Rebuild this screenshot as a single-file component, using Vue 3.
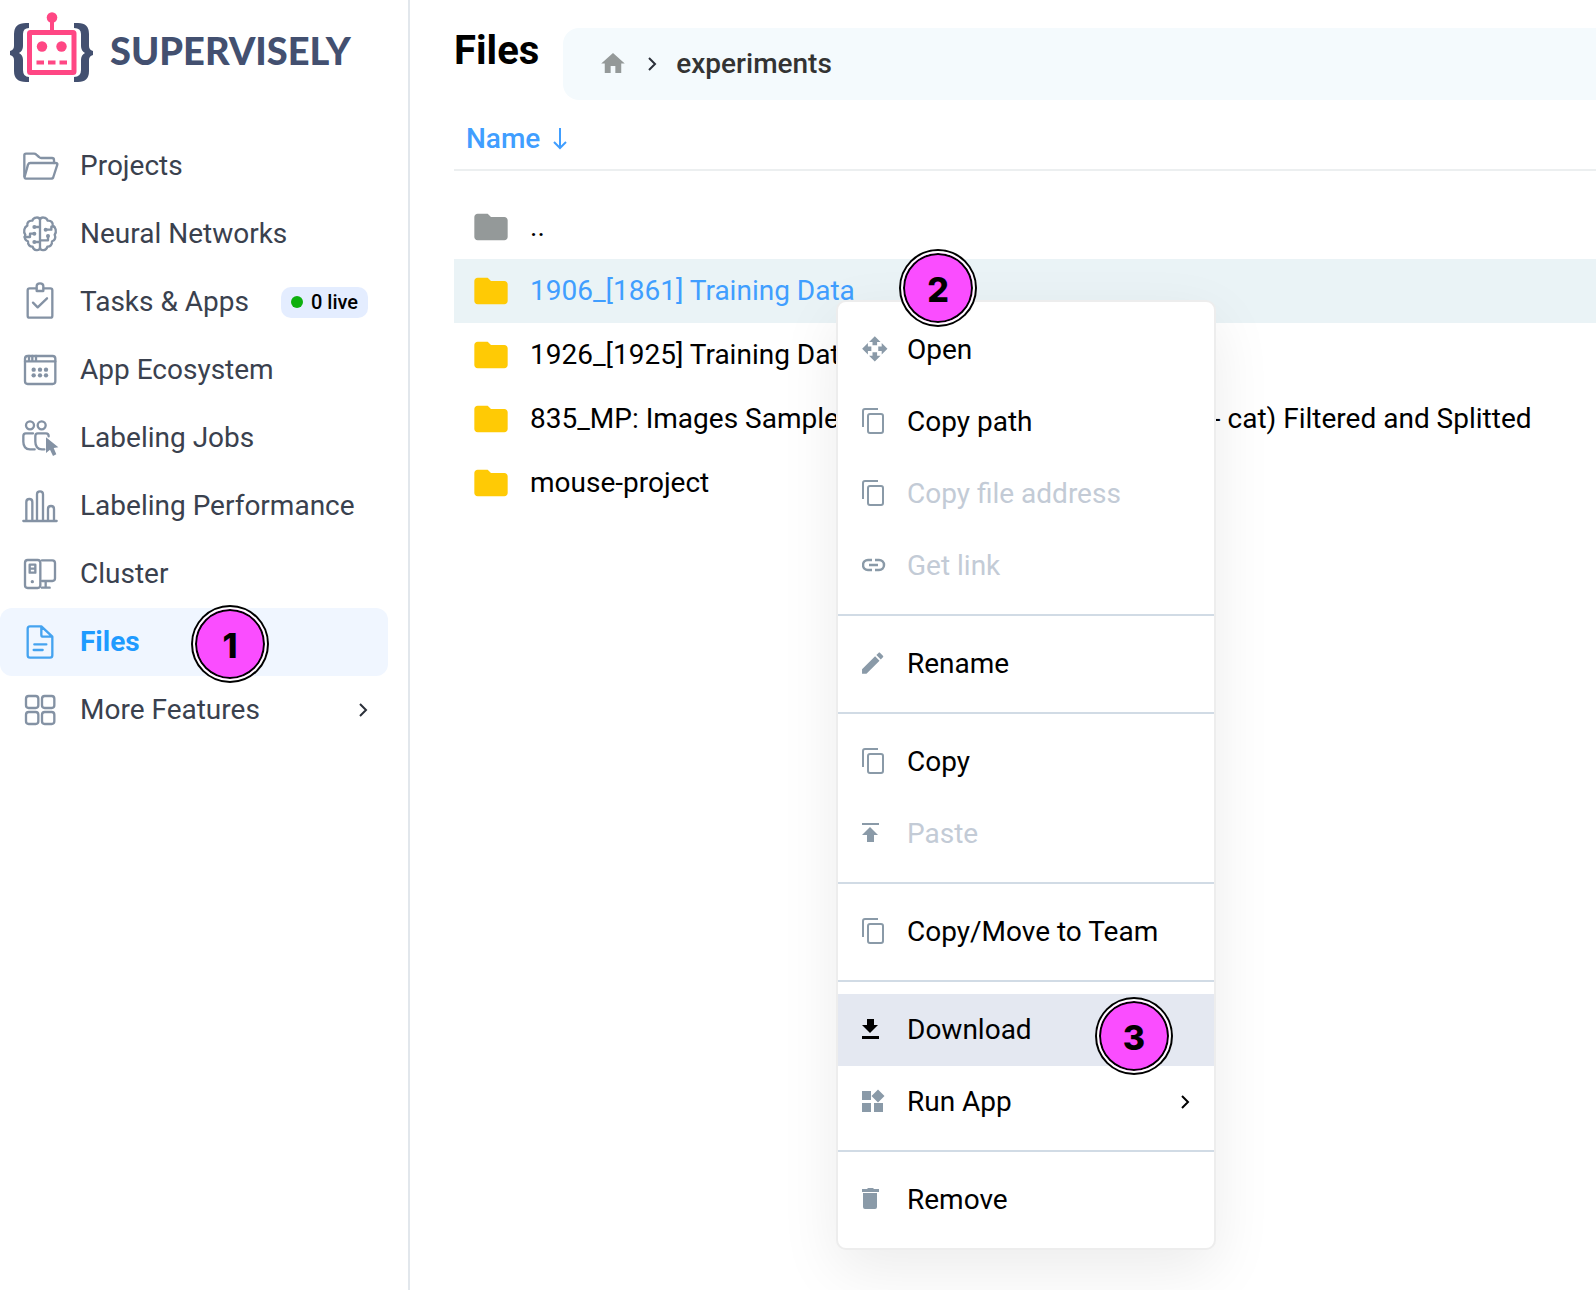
<script setup>
const navItems = [
  { id: 'projects', label: 'Projects' },
  { id: 'neural', label: 'Neural Networks' },
  { id: 'tasks', label: 'Tasks & Apps', badge: '0 live' },
  { id: 'ecosystem', label: 'App Ecosystem' },
  { id: 'jobs', label: 'Labeling Jobs' },
  { id: 'performance', label: 'Labeling Performance' },
  { id: 'cluster', label: 'Cluster' },
  { id: 'files', label: 'Files', active: true, step: 1 },
  { id: 'more', label: 'More Features', expandable: true },
]

const rows = [
  { name: '..', parent: true },
  { name: '1906_[1861] Training Data', selected: true },
  { name: '1926_[1925] Training Data' },
  { name: '835_MP: Images Sample', tail: '- cat) Filtered and Splitted' },
  { name: 'mouse-project' },
]

const menuGroups = [
  [
    { icon: 'open', label: 'Open' },
    { icon: 'copy', label: 'Copy path' },
    { icon: 'copy', label: 'Copy file address', disabled: true },
    { icon: 'link', label: 'Get link', disabled: true },
  ],
  [{ icon: 'edit', label: 'Rename' }],
  [
    { icon: 'copy', label: 'Copy' },
    { icon: 'paste', label: 'Paste', disabled: true },
  ],
  [{ icon: 'copy', label: 'Copy/Move to Team' }],
  [
    { icon: 'download', label: 'Download', active: true, step: 3 },
    { icon: 'apps', label: 'Run App', expandable: true },
  ],
  [{ icon: 'trash', label: 'Remove' }],
]
</script>

<template>
  <div class="page">
    <aside class="sidebar">
      <a class="logo" href="#">
        <svg class="logo-mark" viewBox="0 0 84 72" aria-hidden="true">
          <g fill="#435070">
            <path d="M19 11v5q-6 0-6 6v12q0 5-4 7 4 2 4 7v10q0 7 6 7v5h-3Q4 70 4 59V48q0-4-4-5v-4q4-1 4-5V22Q4 11 16 11z" />
            <path d="M64 11v5q7 0 7 6v12q0 5 4 7-4 2-4 7v10q0 7-7 7v5h4q11 0 11-11V48q0-4 4-5v-4q-4-1-4-5V22q0-11-11-11z" />
          </g>
          <rect x="19.500" y="20.500" width="44.500" height="40" rx="1" fill="#fff" stroke="#ff4784" stroke-width="5" />
          <g fill="#ff4784">
            <circle cx="42" cy="5.500" r="5.300" />
            <path d="M40 8h4v11h-4zM26.500 48.500h7.500v4h-7.500zM38 48.500h7.500v4H38zM49.500 48.500H57v4h-7.500z" />
            <circle cx="32" cy="34.500" r="5.200" />
            <circle cx="51.500" cy="34.500" r="5.200" />
          </g>
        </svg>
        <span class="logo-text">SUPERVISELY</span>
      </a>
      <nav class="nav">
        <a v-for="item in navItems" :key="item.id" href="#" class="nav-item" :class="{ active: item.active }">
          <svg class="nav-icon" viewBox="0 0 120 120" aria-hidden="true">
            <template v-if="item.id === 'projects'">
              <path d="M13 94V31q0-5 5-5h24q4 0 7 3l8 7q3 3 7 3h32q6 0 6 6v9" />
              <path d="M31 54h76q6 0 5 5l-12 37q-1 5-7 5H18q-5 0-4-6l10-36q2-5 7-5z" />
            </template>
            <template v-else-if="item.id === 'neural'">
              <path d="M60 20c-2-9-20-9-23 3-10-1-17 6-15 15-9 4-13 18-6 27-4 8-1 18 8 20-1 10 6 17 14 16 3 13 20 13 22 4 2 9 19 9 22-4 8 1 15-6 14-16 9-2 12-12 8-20 7-9 3-23-6-27 2-9-5-16-15-15-3-12-21-12-23-3z" />
              <path d="M60 18v88M43 42h17M43 87h17M43 62H30v10H14M77 50h17v-9h8M84 69v13H60" />
              <g class="solid">
                <circle cx="43" cy="42" r="6" /><circle cx="43" cy="62" r="6" /><circle cx="43" cy="87" r="6" />
                <circle cx="77" cy="50" r="6" /><circle cx="84" cy="69" r="6" />
              </g>
            </template>
            <template v-else-if="item.id === 'tasks'">
              <path d="M49 22H29q-6 0-6 6v76q0 6 6 6h62q6 0 6-6V28q0-6-6-6H71M39 65l14 14 28-27" />
              <path d="M50 30V16q0-9 10-9t10 9v14z" />
            </template>
            <template v-else-if="item.id === 'ecosystem'">
              <rect x="15" y="21" width="91" height="84" rx="8" />
              <path d="M15 37h91M27 21v16M37 21v16M48 21v16" />
              <g class="solid">
                <circle cx="41" cy="62" r="6.500" /><circle cx="60" cy="62" r="6.500" /><circle cx="78" cy="62" r="6.500" />
                <circle cx="41" cy="79" r="6.500" /><circle cx="60" cy="79" r="6.500" /><circle cx="78" cy="79" r="6.500" />
              </g>
            </template>
            <template v-else-if="item.id === 'jobs'">
              <circle cx="30" cy="25" r="12" /><circle cx="65" cy="25" r="12" />
              <path d="M39 49H17q-7 0-7 8v17q0 22 20 23h14M86 58q0-9-8-9H53q-7 0-7 8v17q0 22 20 23h7" />
              <path class="solid" d="M78 61l37 30-14 2 8 19-10 5-9-19-12 10z" />
            </template>
            <template v-else-if="item.id === 'performance'">
              <path d="M10 108h100M19 108V51q0-9 9-9t9 9v57M51 108V28q0-9 9-9t9 9v80M84 108V72q0-9 9-9t9 9v36" />
            </template>
            <template v-else-if="item.id === 'cluster'">
              <rect x="15" y="21" width="46" height="84" rx="8" />
              <path d="M29 35h17v24H29zM29 47h17M66 22h31q8 0 8 8v46q0 8-8 8H66M77 84v20M66 104h23" />
              <circle class="solid" cx="37" cy="86" r="5" />
            </template>
            <template v-else-if="item.id === 'files'">
              <path d="M64 16H30q-7 0-7 7v80q0 7 7 7h60q7 0 7-7V47zM64 16v25q0 6 6 6h27M43 70h36M41 87h27" />
            </template>
            <template v-else>
              <rect x="18" y="21" width="37" height="36" rx="8" /><rect x="66" y="21" width="37" height="36" rx="8" />
              <rect x="18" y="69" width="37" height="36" rx="8" /><rect x="66" y="69" width="37" height="36" rx="8" />
            </template>
          </svg>
          <span>{{ item.label }}</span>
          <span v-if="item.badge" class="badge"><i class="dot"></i>{{ item.badge }}</span>
          <svg v-if="item.expandable" class="chevron" viewBox="0 0 10 16" aria-hidden="true"><path d="M2 2l6 6-6 6" /></svg>
          <span v-if="item.step" class="step step-nav">{{ item.step }}</span>
        </a>
      </nav>
    </aside>

    <main class="content">
      <header class="header">
        <h1>Files</h1>
        <nav class="crumbs">
          <a href="#" aria-label="Home">
            <svg class="home" viewBox="2 3 20 17" aria-hidden="true"><path d="M10 20v-6h4v6h5v-8h3L12 3 2 12h3v8z" /></svg>
          </a>
          <svg class="chevron" viewBox="0 0 10 16" aria-hidden="true"><path d="M2 2l6 6-6 6" /></svg>
          <a href="#" class="crumb">experiments</a>
        </nav>
      </header>

      <table class="files">
        <thead>
          <tr>
            <th scope="col">
              <button class="sort" type="button">
                Name
                <svg viewBox="0 0 14 22" aria-hidden="true"><path d="M7 0v20M1 14l6 6 6-6" /></svg>
              </button>
            </th>
          </tr>
        </thead>
        <tbody>
          <tr v-for="row in rows" :key="row.name" :class="{ selected: row.selected }">
            <td>
              <div class="cell">
                <svg class="folder" :class="{ parent: row.parent }" viewBox="0 0 24 24" aria-hidden="true">
                  <path d="M10 4H4c-1.100 0-2 .9-2 2v12c0 1.100.9 2 2 2h16c1.100 0 2-.9 2-2V8c0-1.100-.9-2-2-2h-8z" />
                </svg>
                <a href="#">{{ row.name }}</a>
                <a v-if="row.tail" href="#" class="tail">{{ row.tail }}</a>
              </div>
            </td>
          </tr>
        </tbody>
      </table>
    </main>

    <div class="menu" role="menu">
      <div v-for="(group, g) in menuGroups" :key="g" class="group">
        <button
          v-for="entry in group"
          :key="entry.label"
          type="button"
          role="menuitem"
          class="entry"
          :class="{ active: entry.active }"
          :disabled="entry.disabled"
        >
          <svg class="entry-icon" viewBox="0 0 26 26" aria-hidden="true">
            <path v-if="entry.icon === 'open'" transform="translate(-1 -1) scale(1.15)" d="M10 9h4V6h3l-5-5-5 5h3v3zm-1 1H6V7l-5 5 5 5v-3h3v-4zm14 2l-5-5v3h-3v4h3v3l5-5zm-9 3h-4v3H7l5 5 5-5h-3v-3z" />
            <g v-else-if="entry.icon === 'copy'" class="line">
              <path d="M1 19V3q0-2 2-2h13" />
              <rect x="6" y="6" width="15" height="19" rx="2" />
            </g>
            <path v-else-if="entry.icon === 'link'" class="line thick" d="M10 8H6a5 5 0 0 0 0 10h4M13 8h4a5 5 0 0 1 0 10h-4M7 13h9" />
            <path v-else-if="entry.icon === 'edit'" transform="translate(-3.500 -1) scale(1.180)" d="M3 17.250V21h3.750L17.810 9.940l-3.750-3.750L3 17.250zM20.710 7.040c.39-.39.39-1.020 0-1.410l-2.340-2.340c-.39-.39-1.020-.39-1.410 0l-1.830 1.830 3.750 3.750 1.830-1.830z" />
            <path v-else-if="entry.icon === 'paste'" d="M0 3h17v2H0zM8 7l8 8h-4v7H5v-7H0z" />
            <path v-else-if="entry.icon === 'download'" d="M5 3h7v6h4l-8 8-8-8h5zM0 20h17v3H0z" />
            <path v-else-if="entry.icon === 'apps'" d="M0 3h9v9H0zM0 15h9v9H0zM12 15h9v9h-9zM16 1.500l6.500 6.500-6.500 6.500L9.500 8z" />
            <path v-else d="M0 3h5l1-1h5l1 1h5v3H0zM1 7h14v14q0 2-2 2H3q-2 0-2-2z" />
          </svg>
          <span>{{ entry.label }}</span>
          <svg v-if="entry.expandable" class="chevron" viewBox="0 0 10 16" aria-hidden="true"><path d="M2 2l6 6-6 6" /></svg>
          <span v-if="entry.step" class="step step-menu">{{ entry.step }}</span>
        </button>
      </div>
    </div>
    <span class="step step-row">2</span>
  </div>
</template>

<style>
body {
  margin: 0;
  background: #fff;
}
</style>

<style scoped>
.page {
  position: relative;
  display: flex;
  min-height: 100vh;
  overflow: hidden;
  font-family: Roboto, "Liberation Sans", sans-serif;
  font-size: 28px;
  line-height: 32px;
  color: #000;
}
a {
  color: inherit;
  text-decoration: none;
}
button {
  border: 0;
  background: none;
  font: inherit;
  color: inherit;
  text-align: left;
}
.sidebar {
  flex: none;
  box-sizing: border-box;
  width: 410px;
  border-right: 2px solid #e2e7ec;
}
.logo {
  display: flex;
  align-items: center;
  gap: 16px;
  padding: 12px 10px 0;
}
.logo-mark {
  width: 84px;
  height: 72px;
}
.logo-text {
  padding-top: 4px;
  font-family: Lato, sans-serif;
  font-size: 38px;
  font-weight: 900;
  line-height: 44px;
  color: #435070;
}
.nav {
  display: flex;
  flex-direction: column;
  margin: 48px 20px 0 0;
}
.nav-item {
  position: relative;
  display: flex;
  align-items: center;
  height: 68px;
  padding: 0 20px;
  border-radius: 12px;
  color: #3a414e;
}
.nav-item.active {
  background: #f0f6ff;
  color: #1f9bff;
  font-weight: 700;
}
.nav-icon {
  width: 40px;
  height: 40px;
  margin: 0 20px 2px 0;
  fill: none;
  stroke: #8492a4;
  stroke-width: 7;
  stroke-linecap: round;
  stroke-linejoin: round;
}
.nav-icon .solid {
  fill: #8492a4;
  stroke: none;
}
.active .nav-icon {
  stroke: #45a3f0;
}
.badge {
  display: flex;
  align-items: center;
  gap: 8px;
  height: 31px;
  margin-left: auto;
  padding: 0 10px;
  border-radius: 10px;
  background: #e4edff;
  color: #000;
  font-size: 20px;
  font-weight: 500;
}
.dot {
  width: 12px;
  height: 12px;
  border-radius: 50%;
  background: #0eb00e;
}
.chevron {
  width: 10px;
  height: 16px;
  fill: none;
  stroke: #2b303a;
  stroke-width: 2;
}
.nav-item .chevron,
.entry .chevron {
  margin-left: auto;
}
.content {
  flex: 1;
  min-width: 0;
  padding: 28px 0 0 44px;
}
.header {
  display: flex;
  align-items: flex-start;
  gap: 24px;
}
h1 {
  margin: 0;
  font-size: 40px;
  font-weight: 700;
  line-height: 46px;
}
.crumbs {
  flex: 1;
  display: flex;
  align-items: center;
  height: 72px;
  padding-left: 38px;
  border-radius: 16px 0 0 16px;
  background: #f4fafd;
}
.crumbs a {
  display: flex;
}
.crumbs .chevron {
  margin: 0 19px 0 22px;
}
.home {
  width: 24px;
  height: 20px;
  margin-bottom: 2px;
  fill: #949999;
}
.crumb {
  color: #333;
  font-weight: 500;
}
.files {
  width: 100%;
  margin-top: 7px;
  border-spacing: 0;
}
.files th {
  box-sizing: border-box;
  height: 64px;
  padding: 2px 12px 0;
  border-bottom: 2px solid #eceff0;
  text-align: left;
}
.sort {
  display: flex;
  align-items: center;
  gap: 13px;
  padding: 0;
  color: #409eff;
  font-weight: 500;
}
.sort svg {
  width: 14px;
  height: 22px;
  fill: none;
  stroke: #409eff;
  stroke-width: 2;
}
.files tbody::before {
  content: "";
  display: block;
  height: 24px;
}
.files td {
  height: 64px;
  padding: 0 17px;
}
.cell {
  display: flex;
  align-items: center;
  white-space: nowrap;
}
.folder {
  flex: none;
  width: 40px;
  height: 40px;
  margin-right: 19px;
  fill: #ffca05;
}
.folder.parent {
  fill: #949999;
}
.tail {
  margin-left: 374px;
}
.selected td {
  background: #eaf3f6;
  color: #409eff;
}
.menu {
  position: absolute;
  top: 300px;
  left: 836px;
  box-sizing: border-box;
  width: 380px;
  border: 2px solid #ededed;
  border-radius: 10px;
  background: #fff;
  box-shadow: 0 20px 60px rgba(0, 0, 0, 0.08);
}
.group {
  padding: 12px 0;
}
.group + .group {
  border-top: 2px solid #d1dbe5;
}
.entry {
  position: relative;
  display: flex;
  align-items: center;
  width: 100%;
  height: 72px;
  padding: 0 24px;
}
.entry:disabled {
  color: #c3cbd6;
}
.entry.active {
  background: #e4e8f1;
}
.entry-icon {
  width: 26px;
  height: 26px;
  margin: 0 19px 2px 0;
  fill: #8a9aa8;
}
.entry-icon .line {
  fill: none;
  stroke: #8a9aa8;
  stroke-width: 2;
}
.entry-icon .thick {
  stroke-width: 2.5;
}
.active .entry-icon {
  fill: #000;
}
.entry .chevron {
  stroke: #000;
}
.step {
  position: absolute;
  box-sizing: border-box;
  width: 74px;
  height: 74px;
  border: 2px solid #fff;
  border-radius: 50%;
  background: #fa4dff;
  box-shadow: 0 0 0 2px #000, inset 0 0 0 2px #000;
  color: #000;
  font-family: Inter, sans-serif;
  font-size: 34px;
  font-weight: 800;
  line-height: 74px;
  text-align: center;
}
.step-nav {
  top: -1px;
  left: 193px;
}
.step-menu {
  top: 5px;
  right: 43px;
}
.step-row {
  top: 251px;
  left: 901px;
}
</style>
